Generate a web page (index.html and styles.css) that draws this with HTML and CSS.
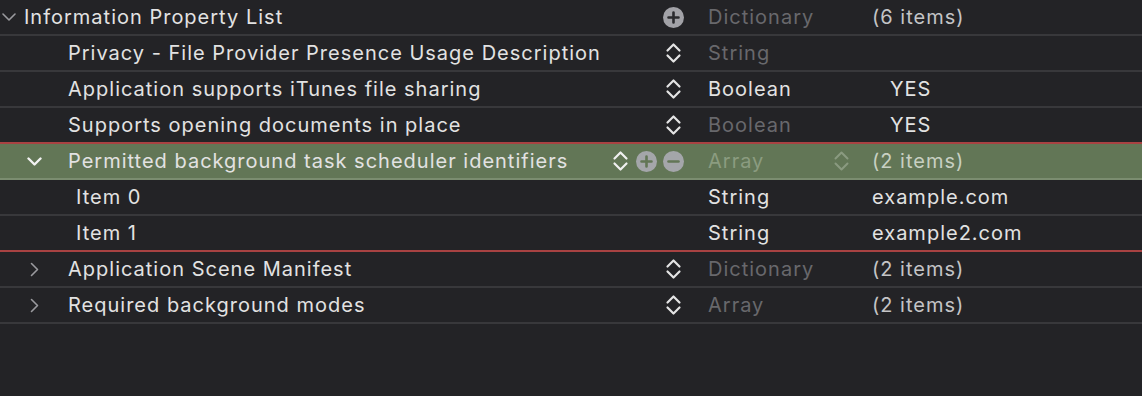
FILE: index.html
```html
<!DOCTYPE html>
<html>
  <head>
    <meta charset="utf-8">
    <title>Info.plist</title>
    <link rel="stylesheet" href="styles.css">
  </head>
  <body>
    <div class="plist">
      <div class="row">
        <div class="key root">
          <span class="chev"><svg width="14" height="8" viewBox="0 0 14 8"><path d="M1 1l6 6 6-6" fill="none" stroke="#9a9a9e" stroke-width="1.6" stroke-linecap="round" stroke-linejoin="round"/></svg></span>
          <span class="name">Information Property List</span>
          <span class="tools">
            <svg class="circle" width="21" height="21" viewBox="0 0 21 21"><circle cx="10.5" cy="10.5" r="10.5" fill="#a2a2a7"/><path d="M10.5 5.5v10M5.5 10.5h10" stroke="#2a2a2d" stroke-width="2.6" stroke-linecap="round"/></svg>
          </span>
        </div>
        <div class="type dim">Dictionary</div>
        <div class="value soft">(6 items)</div>
      </div>

      <div class="row">
        <div class="key lvl1">
          <span class="chev"></span>
          <span class="name">Privacy - File Provider Presence Usage Description</span>
          <span class="tools"><svg class="step" width="21" height="22" viewBox="0 0 21 22"><path d="M4.5 8.5l6-6 6 6M4.5 13.5l6 6 6-6" fill="none" stroke="#e4e4e4" stroke-width="2.2" stroke-linecap="round" stroke-linejoin="round"/></svg></span>
        </div>
        <div class="type dim">String</div>
        <div class="value"></div>
      </div>

      <div class="row">
        <div class="key lvl1">
          <span class="chev"></span>
          <span class="name">Application supports iTunes file sharing</span>
          <span class="tools"><svg class="step" width="21" height="22" viewBox="0 0 21 22"><path d="M4.5 8.5l6-6 6 6M4.5 13.5l6 6 6-6" fill="none" stroke="#e4e4e4" stroke-width="2.2" stroke-linecap="round" stroke-linejoin="round"/></svg></span>
        </div>
        <div class="type">Boolean</div>
        <div class="value bool">YES</div>
      </div>

      <div class="row mark">
        <div class="key lvl1">
          <span class="chev"></span>
          <span class="name">Supports opening documents in place</span>
          <span class="tools"><svg class="step" width="21" height="22" viewBox="0 0 21 22"><path d="M4.5 8.5l6-6 6 6M4.5 13.5l6 6 6-6" fill="none" stroke="#e4e4e4" stroke-width="2.2" stroke-linecap="round" stroke-linejoin="round"/></svg></span>
        </div>
        <div class="type dim">Boolean</div>
        <div class="value bool">YES</div>
      </div>

      <div class="row selected">
        <div class="key lvl1">
          <span class="chev"><svg width="15" height="9" viewBox="0 0 15 9"><path d="M1.5 1.5l6 6 6-6" fill="none" stroke="#f2f2f2" stroke-width="2.4" stroke-linecap="round" stroke-linejoin="round"/></svg></span>
          <span class="name">Permitted background task scheduler identifiers</span>
          <span class="tools">
            <svg class="step" width="21" height="22" viewBox="0 0 21 22"><path d="M4.5 8.5l6-6 6 6M4.5 13.5l6 6 6-6" fill="none" stroke="#f0f0f0" stroke-width="2.2" stroke-linecap="round" stroke-linejoin="round"/></svg>
            <svg class="circle" width="21" height="21" viewBox="0 0 21 21"><circle cx="10.5" cy="10.5" r="10.5" fill="#a4a6aa"/><path d="M10.5 5.5v10M5.5 10.5h10" stroke="#627656" stroke-width="2.6" stroke-linecap="round"/></svg>
            <svg class="circle" width="21" height="21" viewBox="0 0 21 21"><circle cx="10.5" cy="10.5" r="10.5" fill="#a4a6aa"/><path d="M5.5 10.5h10" stroke="#627656" stroke-width="2.6" stroke-linecap="round"/></svg>
          </span>
        </div>
        <div class="type dim">
          <span>Array</span>
          <svg class="step" width="21" height="22" viewBox="0 0 21 22"><path d="M4.5 8.5l6-6 6 6M4.5 13.5l6 6 6-6" fill="none" stroke="#8a9a80" stroke-width="2" stroke-linecap="round" stroke-linejoin="round"/></svg>
        </div>
        <div class="value soft">(2 items)</div>
      </div>

      <div class="row">
        <div class="key lvl2"><span class="name">Item 0</span></div>
        <div class="type">String</div>
        <div class="value">example.com</div>
      </div>

      <div class="row mark">
        <div class="key lvl2"><span class="name">Item 1</span></div>
        <div class="type">String</div>
        <div class="value">example2.com</div>
      </div>

      <div class="row">
        <div class="key lvl1">
          <span class="chev"><svg class="right" width="9" height="15" viewBox="0 0 9 15"><path d="M1.5 1.5l6 6-6 6" fill="none" stroke="#9a9a9e" stroke-width="1.6" stroke-linecap="round" stroke-linejoin="round"/></svg></span>
          <span class="name">Application Scene Manifest</span>
          <span class="tools"><svg class="step" width="21" height="22" viewBox="0 0 21 22"><path d="M4.5 8.5l6-6 6 6M4.5 13.5l6 6 6-6" fill="none" stroke="#e4e4e4" stroke-width="2.2" stroke-linecap="round" stroke-linejoin="round"/></svg></span>
        </div>
        <div class="type dim">Dictionary</div>
        <div class="value soft">(2 items)</div>
      </div>

      <div class="row">
        <div class="key lvl1">
          <span class="chev"><svg class="right" width="9" height="15" viewBox="0 0 9 15"><path d="M1.5 1.5l6 6-6 6" fill="none" stroke="#9a9a9e" stroke-width="1.6" stroke-linecap="round" stroke-linejoin="round"/></svg></span>
          <span class="name">Required background modes</span>
          <span class="tools"><svg class="step" width="21" height="22" viewBox="0 0 21 22"><path d="M4.5 8.5l6-6 6 6M4.5 13.5l6 6 6-6" fill="none" stroke="#e4e4e4" stroke-width="2.2" stroke-linecap="round" stroke-linejoin="round"/></svg></span>
        </div>
        <div class="type dim">Array</div>
        <div class="value soft">(2 items)</div>
      </div>
    </div>
  </body>
</html>
```

FILE: styles.css
```css
* {
  margin: 0;
  box-sizing: border-box;
}

html,
body {
  height: 100%;
  background-color: #232326;
}

body {
  font-family: Inter, "Noto Sans", sans-serif;
  font-size: 20px;
  letter-spacing: 1px;
  color: #e2e2e2;
  overflow: hidden;
}

.plist {
  display: flex;
  flex-direction: column;
}

.row {
  display: grid;
  grid-template-columns: 708px 164px 1fr;
  height: 36px;
  border-bottom: 2px solid #38383b;
  align-items: center;
}

.row.mark {
  border-bottom-color: #a84242;
}

.row.selected {
  background-color: #627656;
  border-bottom-color: #7b8d70;
}

.key {
  display: flex;
  align-items: center;
  height: 100%;
  padding-right: 24px;
}

.key.root {
  padding-left: 2px;
}

.key.root .chev {
  width: 22px;
}

.key.lvl1 {
  padding-left: 24px;
}

.key.lvl1 .chev {
  width: 44px;
  padding-left: 3px;
}

.key.lvl1 .chev .right {
  margin-left: 3px;
}

.key.lvl2 {
  padding-left: 76px;
}

.chev {
  display: flex;
  align-items: center;
  flex-shrink: 0;
}

.name {
  white-space: nowrap;
  flex: 1;
}

.tools {
  display: flex;
  align-items: center;
  gap: 6px;
}

.tools .step + .circle {
  margin-left: -1px;
}

.type {
  display: flex;
  align-items: center;
  justify-content: space-between;
  padding-right: 20px;
}

.dim {
  color: #68686c;
}

.selected .dim {
  color: #8b9c80;
}

.value.soft {
  color: #c4c4c6;
}

.selected .value.soft {
  color: #c8d0c2;
}

.value.bool {
  padding-left: 18px;
}
```
